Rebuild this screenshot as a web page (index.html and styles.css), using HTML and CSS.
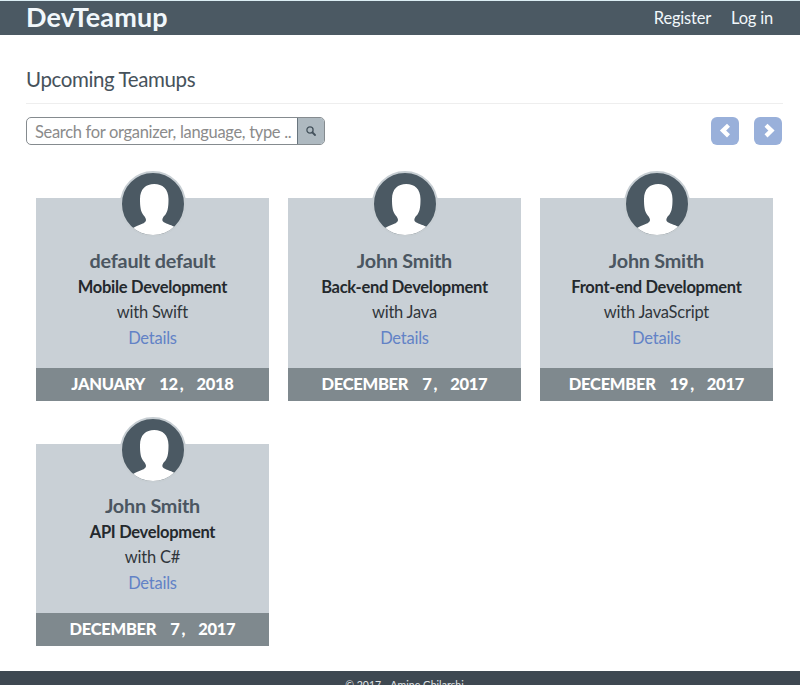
FILE: index.html
```html
<!DOCTYPE html>
<html lang="en">
<head>
<meta charset="utf-8">
<title>DevTeamup</title>
<link rel="stylesheet" href="styles.css">
</head>
<body>
<svg class="defs" aria-hidden="true">
  <symbol id="avatar" viewBox="0 0 62 62">
    <path fill="#fff" d="M11 55C16 52 22 51 23.500 48.500C25 46.500 23 44 21 41.500C18.500 38 18 33 18 26C18 16 24 11 32.200 11C40.500 11 46.500 16 46.500 26C46.500 33 46 38 43.500 41.500C41 44 39.500 46.500 41 48.500C43 50.500 48 51.500 53 54L54 62H10Z"/>
  </symbol>
</svg>
<header class="navbar">
  <a class="brand">DevTeamup</a>
  <nav class="links"><a class="register">Register</a><a class="login">Log in</a></nav>
</header>
<main class="content">
  <h1 class="title">Upcoming Teamups</h1>
  <div class="toolbar">
    <form class="search">
      <span class="field">Search for organizer, language, type ..</span>
      <span class="search-button"><svg width="10" height="10" viewBox="0 0 10 10" fill="none" stroke="#44525c"><circle cx="4" cy="4" r="3.100" stroke-width="1.300"/><path d="M6.500 6.500L9 9" stroke-width="1.800" stroke-linecap="round"/></svg></span>
    </form>
    <div class="pager">
      <span class="page"><svg width="28" height="28" viewBox="0 0 28 28"><path d="M17.500 8.300L12 13.600L17.500 18.900" fill="none" stroke="#fff" stroke-width="4.300"/></svg></span>
      <span class="page"><svg width="28" height="28" viewBox="0 0 28 28"><path d="M12 8.300L17.500 13.600L12 18.900" fill="none" stroke="#fff" stroke-width="4.300"/></svg></span>
    </div>
  </div>
  <section class="cards">
    <article class="card">
      <svg class="avatar"><use href="#avatar"/></svg>
      <div class="info"><h2 class="name">default default</h2><p class="type">Mobile Development</p><p class="lang">with Swift</p><a class="details">Details</a></div>
      <div class="date"><span class="month">JANUARY</span><span class="day">12</span><span class="comma">,</span><span>2018</span></div>
    </article>
    <article class="card">
      <svg class="avatar"><use href="#avatar"/></svg>
      <div class="info"><h2 class="name">John Smith</h2><p class="type">Back-end Development</p><p class="lang">with Java</p><a class="details">Details</a></div>
      <div class="date"><span class="month">DECEMBER</span><span class="day">7</span><span class="comma">,</span><span>2017</span></div>
    </article>
    <article class="card">
      <svg class="avatar"><use href="#avatar"/></svg>
      <div class="info"><h2 class="name">John Smith</h2><p class="type">Front-end Development</p><p class="lang">with JavaScript</p><a class="details">Details</a></div>
      <div class="date"><span class="month">DECEMBER</span><span class="day">19</span><span class="comma">,</span><span>2017</span></div>
    </article>
    <article class="card">
      <svg class="avatar"><use href="#avatar"/></svg>
      <div class="info"><h2 class="name">John Smith</h2><p class="type">API Development</p><p class="lang">with C#</p><a class="details">Details</a></div>
      <div class="date"><span class="month">DECEMBER</span><span class="day">7</span><span class="comma">,</span><span>2017</span></div>
    </article>
  </section>
</main>
<footer class="footer">© 2017 - Amine Ghilarshi</footer>
</body>
</html>
```

FILE: styles.css
```css
* { box-sizing: border-box; }
html { height: 100%; overflow: hidden; }
body {
  margin: 0;
  height: 685px;
  overflow: hidden;
  background: #fff;
  color: #30363b;
  font-family: Lato, sans-serif;
  font-size: 16.500px;
  letter-spacing: -0.230px;
}
h1, h2, p { margin: 0; }
.defs { display: none; }
.navbar {
  display: flex;
  justify-content: space-between;
  align-items: flex-start;
  height: 35px;
  padding: 0 27px 0 26px;
  border-top: 1px solid #dceef4;
  background: #4b5963;
  color: #f1f7fb;
}
.brand { font-size: 27px; font-weight: 700; line-height: 32px; letter-spacing: 0.120px; }
.links { display: flex; gap: 20px; line-height: 35px; letter-spacing: -0.200px; }
.content { height: 636px; padding: 0 17px 0 26px; }
.title {
  height: 69px;
  padding-top: 30px;
  border-bottom: 1px solid #eee;
  color: #46525b;
  font-size: 20.500px;
  font-weight: 400;
  line-height: 28px;
  letter-spacing: -0.380px;
}
.toolbar { display: flex; justify-content: space-between; margin-top: 13px; height: 28px; }
.search {
  display: flex;
  width: 299px;
  height: 28px;
  border: 1px solid #858b8f;
  border-radius: 5px;
  overflow: hidden;
}
.field { flex: 1; padding-left: 8px; color: #8b8b8b; line-height: 28px; letter-spacing: -0.320px; white-space: nowrap; }
.search-button {
  display: flex;
  align-items: center;
  justify-content: center;
  width: 27px;
  border-left: 1px solid #69757e;
  background: #aeb9c0;
}
.pager { display: flex; gap: 15px; padding-right: 1px; }
.page { width: 28px; height: 28px; border-radius: 6px; background: #99b0da; }
.page svg { display: block; }
.cards {
  display: grid;
  grid-template-columns: repeat(3, 232.300px);
  column-gap: 19.700px;
  row-gap: 16px;
  padding: 26px 0 0 10.300px;
}
.card {
  display: flex;
  flex-direction: column;
  align-items: center;
  height: 229.500px;
  background: linear-gradient(transparent 27px, #c9d0d6 27px);
}
.avatar {
  flex: none;
  width: 66px;
  height: 66px;
  margin-left: 1px;
  border: 2px solid #c7ced3;
  border-radius: 50%;
  background: #4b5963;
}
.info { height: 130.500px; padding-top: 10.500px; text-align: center; }
.name { color: #4b5661; font-size: 19.800px; font-weight: 700; line-height: 25px; }
.type { padding-top: 2px; color: #24292d; font-weight: 700; line-height: 25px; letter-spacing: -0.290px; }
.lang { line-height: 24px; }
.details { display: block; color: #6282c6; line-height: 28px; }
.date {
  display: flex;
  justify-content: center;
  width: 100%;
  height: 33px;
  background: #7f898e;
  color: #fff;
  font-weight: 900;
  line-height: 33px;
  letter-spacing: -0.280px;
}
.month { margin-right: 14px; }
.comma { margin: 0 13px 0 2px; }
.footer {
  height: 14px;
  padding: 7px 0 0 9px;
  background: #3e4851;
  color: #e0e5e8;
  font-size: 10.500px;
  line-height: 14px;
  letter-spacing: 0.050px;
  text-align: center;
  white-space: pre;
}
```
